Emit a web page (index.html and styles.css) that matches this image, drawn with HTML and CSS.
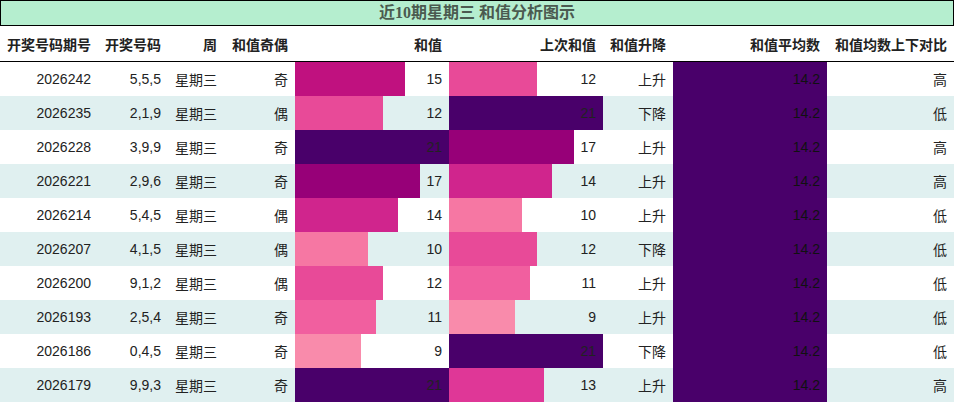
FILE: index.html
```html
<!DOCTYPE html>
<html lang="zh">
<head>
<meta charset="utf-8">
<title>近10期星期三 和值分析图示</title>
<link rel="stylesheet" href="styles.css">
</head>
<body>
<table class="chart">
  <colgroup>
    <col class="c-issue"><col class="c-nums"><col class="c-week"><col class="c-parity">
    <col class="c-sum"><col class="c-prev"><col class="c-trend"><col class="c-avg"><col class="c-cmp">
  </colgroup>
  <thead>
    <tr class="title-row"><th colspan="9" class="title">近10期星期三 和值分析图示</th></tr>
    <tr class="head-row">
      <th>开奖号码期号</th><th>开奖号码</th><th>周</th><th>和值奇偶</th><th>和值</th><th>上次和值</th><th>和值升降</th><th>和值平均数</th><th>和值均数上下对比</th>
    </tr>
  </thead>
  <tbody>
    <tr><td>2026242</td><td>5,5,5</td><td>星期三</td><td>奇</td><td class="bar" style="--w:71.43%;--c:#c0117f">15</td><td class="bar" style="--w:57.14%;--c:#e84a98">12</td><td>上升</td><td class="avg">14.2</td><td>高</td></tr>
    <tr><td>2026235</td><td>2,1,9</td><td>星期三</td><td>偶</td><td class="bar" style="--w:57.14%;--c:#e84a98">12</td><td class="bar" style="--w:100%;--c:#49006a">21</td><td>下降</td><td class="avg">14.2</td><td>低</td></tr>
    <tr><td>2026228</td><td>3,9,9</td><td>星期三</td><td>奇</td><td class="bar" style="--w:100%;--c:#49006a">21</td><td class="bar" style="--w:80.95%;--c:#970078">17</td><td>上升</td><td class="avg">14.2</td><td>高</td></tr>
    <tr><td>2026221</td><td>2,9,6</td><td>星期三</td><td>奇</td><td class="bar" style="--w:80.95%;--c:#970078">17</td><td class="bar" style="--w:66.67%;--c:#d0258d">14</td><td>上升</td><td class="avg">14.2</td><td>高</td></tr>
    <tr><td>2026214</td><td>5,4,5</td><td>星期三</td><td>偶</td><td class="bar" style="--w:66.67%;--c:#d0258d">14</td><td class="bar" style="--w:47.62%;--c:#f677a3">10</td><td>上升</td><td class="avg">14.2</td><td>低</td></tr>
    <tr><td>2026207</td><td>4,1,5</td><td>星期三</td><td>偶</td><td class="bar" style="--w:47.62%;--c:#f677a3">10</td><td class="bar" style="--w:57.14%;--c:#e84a98">12</td><td>下降</td><td class="avg">14.2</td><td>低</td></tr>
    <tr><td>2026200</td><td>9,1,2</td><td>星期三</td><td>偶</td><td class="bar" style="--w:57.14%;--c:#e84a98">12</td><td class="bar" style="--w:52.38%;--c:#f15f9f">11</td><td>上升</td><td class="avg">14.2</td><td>低</td></tr>
    <tr><td>2026193</td><td>2,5,4</td><td>星期三</td><td>奇</td><td class="bar" style="--w:52.38%;--c:#f15f9f">11</td><td class="bar" style="--w:42.86%;--c:#f98bab">9</td><td>上升</td><td class="avg">14.2</td><td>低</td></tr>
    <tr><td>2026186</td><td>0,4,5</td><td>星期三</td><td>奇</td><td class="bar" style="--w:42.86%;--c:#f98bab">9</td><td class="bar" style="--w:100%;--c:#49006a">21</td><td>下降</td><td class="avg">14.2</td><td>低</td></tr>
    <tr><td>2026179</td><td>9,9,3</td><td>星期三</td><td>奇</td><td class="bar" style="--w:100%;--c:#49006a">21</td><td class="bar" style="--w:61.9%;--c:#df3797">13</td><td>上升</td><td class="avg">14.2</td><td>高</td></tr>
  </tbody>
</table>
</body>
</html>
```

FILE: styles.css
```css
html, body {
  margin: 0;
  padding: 0;
  background: #ffffff;
}

.chart {
  width: 954px;
  table-layout: fixed;
  border-collapse: separate;
  border-spacing: 0;
  font-family: "Liberation Sans", "Noto Sans CJK SC", sans-serif;
  font-size: 14px;
  color: #222222;
}

.c-issue { width: 98px; }
.c-nums { width: 70px; }
.c-week { width: 56px; }
.c-parity { width: 71px; }
.c-sum { width: 154px; }
.c-prev { width: 154px; }
.c-trend { width: 70px; }
.c-avg { width: 154px; }
.c-cmp { width: 127px; }

.title {
  height: 24px;
  padding: 0;
  border: 1px solid #000000;
  background: #b5eecf;
  font-family: "Liberation Serif", "Noto Sans CJK SC", serif;
  font-size: 16px;
  font-weight: bold;
  color: #4b5a50;
  text-align: center;
  line-height: 24px;
}

.head-row th {
  height: 35px;
  padding: 0 7px;
  border-bottom: 1px solid #000000;
  font-weight: bold;
  text-align: right;
  white-space: nowrap;
  color: #222222;
}

tbody td {
  height: 34px;
  padding: 0 7px;
  text-align: right;
  white-space: nowrap;
}

tbody tr:nth-child(even) td {
  background-color: #e0f0f0;
}

tbody td.bar {
  background-image: linear-gradient(90deg, var(--c) 0, var(--c) var(--w), transparent var(--w));
}

tbody td.avg,
tbody tr:nth-child(even) td.avg {
  background: #49006a;
  color: #111111;
}
```
